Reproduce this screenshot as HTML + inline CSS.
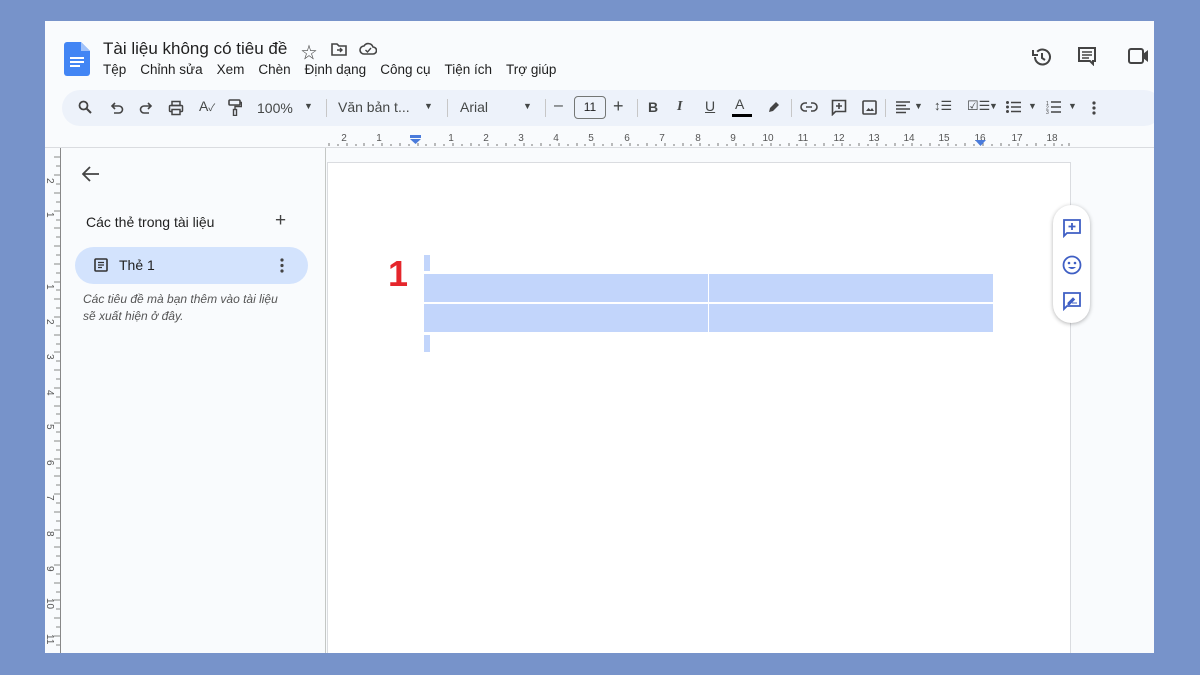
<!DOCTYPE html>
<html><head><meta charset="utf-8"><style>
*{margin:0;padding:0;box-sizing:border-box}
body{width:1200px;height:675px;background:#7793ca;position:relative;overflow:hidden;font-family:"Liberation Sans","Noto Sans CJK SC",sans-serif;color:#1f1f1f}
.app{position:absolute;left:45px;top:21px;width:1109px;height:632px;background:#f9fbfd;overflow:hidden}
.a{position:absolute}
.menu span{margin-right:14px}
.tb{position:absolute;left:17px;top:69px;width:1100px;height:36px;background:#edf2fa;border-radius:18px}
.ic{position:absolute;top:0;font-size:14px;color:#444746}
.sep{position:absolute;top:9px;width:1px;height:18px;background:#c7c7c7}
svg{position:absolute}
</style></head><body>
<div class="app">
 <svg style="left:19px;top:21px" width="26" height="34" viewBox="0 0 26 34"><path d="M3 0h14l9 9v22a3 3 0 0 1-3 3H3a3 3 0 0 1-3-3V3a3 3 0 0 1 3-3z" fill="#4285f4"/><path d="M17 0v9h9z" fill="#a1c2fa"/><rect x="6" y="15" width="14" height="2" fill="#fff"/><rect x="6" y="19" width="14" height="2" fill="#fff"/><rect x="6" y="23" width="10" height="2" fill="#fff"/></svg>
 <div class="a" style="left:58px;top:18px;font-size:17px;color:#1f1f1f">Tài liệu không có tiêu đề</div>
 <div class="a" style="left:256px;top:18px;font-size:16px;color:#444">☆</div>
 <svg style="left:286px;top:21px" width="16" height="14" viewBox="0 0 16 14"><path d="M1 2h5l2 2h7v9H1z" fill="none" stroke="#444" stroke-width="1.6"/><path d="M6 8h5M9 6l2 2-2 2" fill="none" stroke="#444" stroke-width="1.4"/></svg>
 <svg style="left:314px;top:21px" width="18" height="13" viewBox="0 0 18 13"><path d="M5 12a4 4 0 0 1 0-8 5 5 0 0 1 9 1 3.5 3.5 0 0 1 0 7z" fill="none" stroke="#444" stroke-width="1.6"/><path d="M6.5 8l2 2 3.5-4" fill="none" stroke="#444" stroke-width="1.4"/></svg>
 <div class="a menu" style="left:58px;top:41px;font-size:13.5px;color:#1f1f1f;white-space:nowrap"><span>Tệp</span><span>Chỉnh sửa</span><span>Xem</span><span>Chèn</span><span>Định dạng</span><span>Công cụ</span><span>Tiện ích</span><span>Trợ giúp</span></div>
 <svg style="left:986px;top:25px" width="22" height="22" viewBox="0 0 22 22"><path d="M4 11a7.5 7.5 0 1 0 2.2-5.3" fill="none" stroke="#444" stroke-width="2"/><path d="M2 4v5h5" fill="none" stroke="#444" stroke-width="2"/><path d="M11 7v5l3 2" fill="none" stroke="#444" stroke-width="2"/></svg>
 <svg style="left:1032px;top:25px" width="20" height="20" viewBox="0 0 20 20"><path d="M2 2h16v13h-2v3l-3-3H2z" fill="none" stroke="#444" stroke-width="2"/><path d="M5 6h10M5 9h10M5 12h7" stroke="#444" stroke-width="1.6"/></svg>
 <svg style="left:1083px;top:27px" width="26" height="16" viewBox="0 0 26 16"><rect x="1" y="1" width="14" height="14" rx="2" fill="none" stroke="#444" stroke-width="2"/><path d="M15 6l5-4v12l-5-4z" fill="#444"/></svg>

 <div class="tb">
  <svg style="left:16px;top:10px" width="14" height="14" viewBox="0 0 14 14"><circle cx="5.5" cy="5.5" r="4" fill="none" stroke="#444" stroke-width="1.8"/><path d="M8.5 8.5l4.5 4.5" stroke="#444" stroke-width="2"/></svg>
  <svg style="left:48px;top:11px" width="14" height="14" viewBox="0 0 14 14"><path d="M3 5h6a3.5 3.5 0 0 1 0 7H4" fill="none" stroke="#444" stroke-width="1.6"/><path d="M5 2L2 5l3 3" fill="none" stroke="#444" stroke-width="1.6"/></svg>
  <svg style="left:77px;top:11px" width="14" height="14" viewBox="0 0 14 14"><path d="M11 5H5a3.5 3.5 0 0 0 0 7h5" fill="none" stroke="#444" stroke-width="1.6"/><path d="M9 2l3 3-3 3" fill="none" stroke="#444" stroke-width="1.6"/></svg>
  <svg style="left:106px;top:10px" width="16" height="16" viewBox="0 0 16 16"><rect x="4" y="1.5" width="8" height="4" fill="none" stroke="#444" stroke-width="1.5"/><rect x="1.5" y="5.5" width="13" height="6" rx="1" fill="none" stroke="#444" stroke-width="1.5"/><rect x="4" y="9.5" width="8" height="5" fill="#edf2fa" stroke="#444" stroke-width="1.5"/></svg>
  <div class="ic" style="left:137px;top:8px;font-size:14px">A<span style="font-size:10px">✓</span></div>
  <svg style="left:166px;top:9px" width="14" height="17" viewBox="0 0 14 17"><rect x="1" y="1" width="11" height="5" rx="1" fill="none" stroke="#444" stroke-width="1.6"/><path d="M12 3.5h1.5v4H7v3" fill="none" stroke="#444" stroke-width="1.4"/><rect x="5.5" y="10.5" width="3" height="6" fill="none" stroke="#444" stroke-width="1.4"/></svg>
  <div class="ic" style="left:195px;top:10px;font-size:14px">100%</div>
  <div class="ic" style="left:242px;top:11px;font-size:9px">▼</div>
  <div class="sep" style="left:264px"></div>
  <div class="ic" style="left:276px;top:9px;font-size:14px">Văn bản t...</div>
  <div class="ic" style="left:362px;top:11px;font-size:9px">▼</div>
  <div class="sep" style="left:385px"></div>
  <div class="ic" style="left:398px;top:9px;font-size:14px">Arial</div>
  <div class="ic" style="left:461px;top:11px;font-size:9px">▼</div>
  <div class="sep" style="left:483px"></div>
  <div class="ic" style="left:492px;top:7px;font-size:16px">–</div>
  <div class="a" style="left:512px;top:6px;width:32px;height:23px;border:1px solid #747775;border-radius:4px;font-size:12px;text-align:center;line-height:21px;color:#1f1f1f">11</div>
  <div class="ic" style="left:551px;top:6px;font-size:18px">+</div>
  <div class="sep" style="left:575px"></div>
  <div class="ic" style="left:586px;top:9px;font-size:14px;font-weight:bold">B</div>
  <div class="ic" style="left:615px;top:9px;font-size:14px;font-style:italic;font-family:'Liberation Serif',serif;font-weight:bold">I</div>
  <div class="ic" style="left:643px;top:8px;font-size:14px;text-decoration:underline">U</div>
  <div class="ic" style="left:673px;top:6px;font-size:14px">A</div>
  <div class="a" style="left:670px;top:24px;width:20px;height:3px;background:#000"></div>
  <svg style="left:705px;top:10px" width="14" height="14" viewBox="0 0 14 14"><path d="M2 12l1-4 6-6 3 3-6 6z" fill="#444"/></svg>
  <div class="sep" style="left:729px"></div>
  <svg style="left:738px;top:11px" width="18" height="12" viewBox="0 0 18 12"><path d="M7 2H5a4 4 0 0 0 0 8h2M11 2h2a4 4 0 0 1 0 8h-2M6 6h6" fill="none" stroke="#444" stroke-width="1.6"/></svg>
  <svg style="left:769px;top:9px" width="16" height="17" viewBox="0 0 16 17"><path d="M1.5 1.5h13v11h-10l-3 3z" fill="none" stroke="#444" stroke-width="1.6"/><path d="M8 4v6M5 7h6" stroke="#444" stroke-width="1.6"/></svg>
  <svg style="left:800px;top:10px" width="15" height="15" viewBox="0 0 15 15"><rect x="1" y="1" width="13" height="13" rx="1" fill="none" stroke="#444" stroke-width="1.6"/><path d="M4 11l2.5-3 2 2 1.5-2 2 3z" fill="#444"/></svg>
  <div class="sep" style="left:823px"></div>
  <svg style="left:834px;top:11px" width="14" height="13" viewBox="0 0 14 13"><path d="M0 1h14M0 4.5h10M0 8h14M0 11.5h10" stroke="#444" stroke-width="1.5"/></svg>
  <div class="ic" style="left:852px;top:11px;font-size:9px">▼</div>
  <div class="ic" style="left:872px;top:8px;font-size:13px">↕☰</div>
  <div class="ic" style="left:905px;top:8px;font-size:13px">☑☰</div>
  <div class="ic" style="left:927px;top:11px;font-size:9px">▼</div>
  <svg style="left:944px;top:11px" width="15" height="12" viewBox="0 0 15 12"><circle cx="1.5" cy="1.5" r="1.5" fill="#444"/><circle cx="1.5" cy="6" r="1.5" fill="#444"/><circle cx="1.5" cy="10.5" r="1.5" fill="#444"/><path d="M5 1.5h10M5 6h10M5 10.5h10" stroke="#444" stroke-width="1.5"/></svg>
  <div class="ic" style="left:966px;top:11px;font-size:9px">▼</div>
  <svg style="left:984px;top:10px" width="15" height="14" viewBox="0 0 15 14"><path d="M5 2h10M5 7h10M5 12h10" stroke="#444" stroke-width="1.5"/><text x="0" y="5" font-size="5" fill="#444">1</text><text x="0" y="9.5" font-size="5" fill="#444">2</text><text x="0" y="14" font-size="5" fill="#444">3</text></svg>
  <div class="ic" style="left:1006px;top:11px;font-size:9px">▼</div>
  <svg style="left:1030px;top:11px" width="4" height="14" viewBox="0 0 4 14"><circle cx="2" cy="2" r="1.6" fill="#444"/><circle cx="2" cy="7" r="1.6" fill="#444"/><circle cx="2" cy="12" r="1.6" fill="#444"/></svg>
 </div>

 <div class="a" style="left:0;top:126px;width:1109px;height:1px;background:#dadce0"></div>
 <svg style="left:280px;top:110px" width="750" height="16" viewBox="0 0 750 16">
  <g stroke="#777" stroke-width="1">
   <path d="M4 12v3M13 13v2M22 12v3M31 13v2M39 12v3M48 13v2M57 12v3M66 13v2M75 12v3M84 13v2M93 12v3M101 13v2M110 12v3M119 13v2M128 12v3M137 13v2M146 12v3M154 13v2M163 12v3M172 13v2M181 12v3M190 13v2M199 12v3M207 13v2M216 12v3M225 13v2M234 12v3M243 13v2M252 12v3M260 13v2M269 12v3M278 13v2M287 12v3M296 13v2M305 12v3M313 13v2M322 12v3M331 13v2M340 12v3M349 13v2M358 12v3M366 13v2M375 12v3M384 13v2M393 12v3M402 13v2M411 12v3M419 13v2M428 12v3M437 13v2M446 12v3M455 13v2M464 12v3M472 13v2M481 12v3M490 13v2M499 12v3M508 13v2M517 12v3M525 13v2M534 12v3M543 13v2M552 12v3M561 13v2M570 12v3M578 13v2M587 12v3M596 13v2M605 12v3M614 13v2M623 12v3M631 13v2M640 12v3M649 13v2M658 12v3M667 13v2M676 12v3M684 13v2M693 12v3M702 13v2M711 12v3M720 13v2M729 12v3M737 13v2M744 12v3"/>
  </g>
  <g font-size="10" fill="#555" font-family="Liberation Sans" text-anchor="middle">
   <text x="19" y="10">2</text><text x="54" y="10">1</text><text x="126" y="10">1</text><text x="161" y="10">2</text><text x="196" y="10">3</text><text x="231" y="10">4</text><text x="266" y="10">5</text><text x="302" y="10">6</text><text x="337" y="10">7</text><text x="373" y="10">8</text><text x="408" y="10">9</text><text x="443" y="10">10</text><text x="478" y="10">11</text><text x="514" y="10">12</text><text x="549" y="10">13</text><text x="584" y="10">14</text><text x="619" y="10">15</text><text x="655" y="10">16</text><text x="692" y="10">17</text><text x="727" y="10">18</text>
  </g>
  <rect x="85" y="4" width="11" height="3" fill="#4a7bdb"/><path d="M85 8h11l-5.5 5z" fill="#4a7bdb"/>
  <path d="M650 9h11l-5.5 6z" fill="#4a7bdb"/>
 </svg>

 <div class="a" style="left:15px;top:127px;width:1px;height:505px;background:#888"></div>
 <svg style="left:0;top:127px" width="16" height="505"><g stroke="#888"><path d="M9 9h6M11 18h4M9 27h6M11 36h4M9 45h6M11 54h4M9 63h6M11 72h4M9 80h6M11 89h4M9 98h6M11 107h4M9 116h6M11 125h4M9 134h6M11 142h4M9 151h6M11 160h4M9 169h6M11 178h4M9 187h6M11 196h4M9 204h6M11 213h4M9 222h6M11 231h4M9 240h6M11 249h4M9 258h6M11 266h4M9 275h6M11 284h4M9 293h6M11 302h4M9 311h6M11 320h4M9 328h6M11 337h4M9 346h6M11 355h4M9 364h6M11 373h4M9 382h6M11 390h4M9 399h6M11 408h4M9 417h6M11 426h4M9 435h6M11 444h4M9 452h6M11 461h4M9 470h6M11 479h4M9 488h6M11 497h4"/></g>
 <g font-size="10" fill="#555" font-family="Liberation Sans">
  <text transform="translate(2,30) rotate(90)">2</text><text transform="translate(2,64) rotate(90)">1</text><text transform="translate(2,136) rotate(90)">1</text><text transform="translate(2,171) rotate(90)">2</text><text transform="translate(2,206) rotate(90)">3</text><text transform="translate(2,242) rotate(90)">4</text><text transform="translate(2,276) rotate(90)">5</text><text transform="translate(2,312) rotate(90)">6</text><text transform="translate(2,347) rotate(90)">7</text><text transform="translate(2,383) rotate(90)">8</text><text transform="translate(2,418) rotate(90)">9</text><text transform="translate(2,450) rotate(90)">10</text><text transform="translate(2,486) rotate(90)">11</text>
 </g></svg>

 <div class="a" style="left:16px;top:127px;width:265px;height:505px;background:#f9fbfd;border-right:1px solid #c4c7c5"></div>
 <svg style="left:37px;top:145px" width="18" height="16" viewBox="0 0 18 16"><path d="M17 8H2M8 1L1 8l7 7" fill="none" stroke="#444" stroke-width="1.8"/></svg>
 <div class="a" style="left:41px;top:193px;font-size:14px;color:#1f1f1f">Các thẻ trong tài liệu</div>
 <div class="a" style="left:230px;top:189px;font-size:19px;color:#444">+</div>
 <div class="a" style="left:30px;top:226px;width:233px;height:37px;background:#d3e3fd;border-radius:19px"></div>
 <svg style="left:49px;top:237px" width="14" height="14" viewBox="0 0 14 14"><rect x="1" y="1" width="12" height="12" rx="1" fill="none" stroke="#333" stroke-width="1.6"/><path d="M4 4.5h6M4 7h6M4 9.5h4" stroke="#333" stroke-width="1.3"/></svg>
 <div class="a" style="left:74px;top:236px;font-size:14px;color:#1f1f1f">Thẻ 1</div>
 <svg style="left:235px;top:237px" width="4" height="15"><circle cx="2" cy="2" r="1.6" fill="#444"/><circle cx="2" cy="7.5" r="1.6" fill="#444"/><circle cx="2" cy="13" r="1.6" fill="#444"/></svg>
 <div class="a" style="left:38px;top:270px;font-size:12px;font-style:italic;color:#555;line-height:17px">Các tiêu đề mà bạn thêm vào tài liệu<br>sẽ xuất hiện ở đây.</div>

 <div class="a" style="left:282px;top:141px;width:744px;height:500px;background:#fff;border:1px solid #dadce0"></div>
 <div class="a" style="left:343px;top:235px;font-size:36px;font-weight:bold;color:#e5262c;line-height:1">1</div>
 <div class="a" style="left:379px;top:234px;width:6px;height:16px;background:#c2d5fb"></div>
 <div class="a" style="left:379px;top:314px;width:6px;height:17px;background:#c2d5fb"></div>
 <div class="a" style="left:379px;top:253px;width:284px;height:28px;background:#c2d5fb"></div>
 <div class="a" style="left:664px;top:253px;width:284px;height:28px;background:#c2d5fb"></div>
 <div class="a" style="left:379px;top:283px;width:284px;height:28px;background:#c2d5fb"></div>
 <div class="a" style="left:664px;top:283px;width:284px;height:28px;background:#c2d5fb"></div>

 <div class="a" style="left:1008px;top:184px;width:37px;height:118px;background:#fff;border-radius:19px;box-shadow:0 1px 4px rgba(0,0,0,.3)"></div>
 <svg style="left:1017px;top:197px" width="20" height="20" viewBox="0 0 20 20"><path d="M2 2h16v13H5l-3 3z" fill="none" stroke="#3f5fc4" stroke-width="1.8"/><path d="M10 5v7M6.5 8.5h7" stroke="#3f5fc4" stroke-width="1.8"/></svg>
 <svg style="left:1017px;top:234px" width="20" height="20" viewBox="0 0 20 20"><circle cx="10" cy="10" r="8.5" fill="none" stroke="#3f5fc4" stroke-width="1.8"/><circle cx="7" cy="8" r="1.3" fill="#3f5fc4"/><circle cx="13" cy="8" r="1.3" fill="#3f5fc4"/><path d="M6 12q4 4 8 0z" fill="#3f5fc4"/></svg>
 <svg style="left:1017px;top:270px" width="20" height="20" viewBox="0 0 20 20"><path d="M2 2h16v13H5l-3 3z" fill="none" stroke="#3f5fc4" stroke-width="1.8"/><path d="M6 12l5-5 1.5 1.5-5 5H6zM10 12h5" fill="#3f5fc4" stroke="#3f5fc4" stroke-width="1"/></svg>
</div>
</body></html>
